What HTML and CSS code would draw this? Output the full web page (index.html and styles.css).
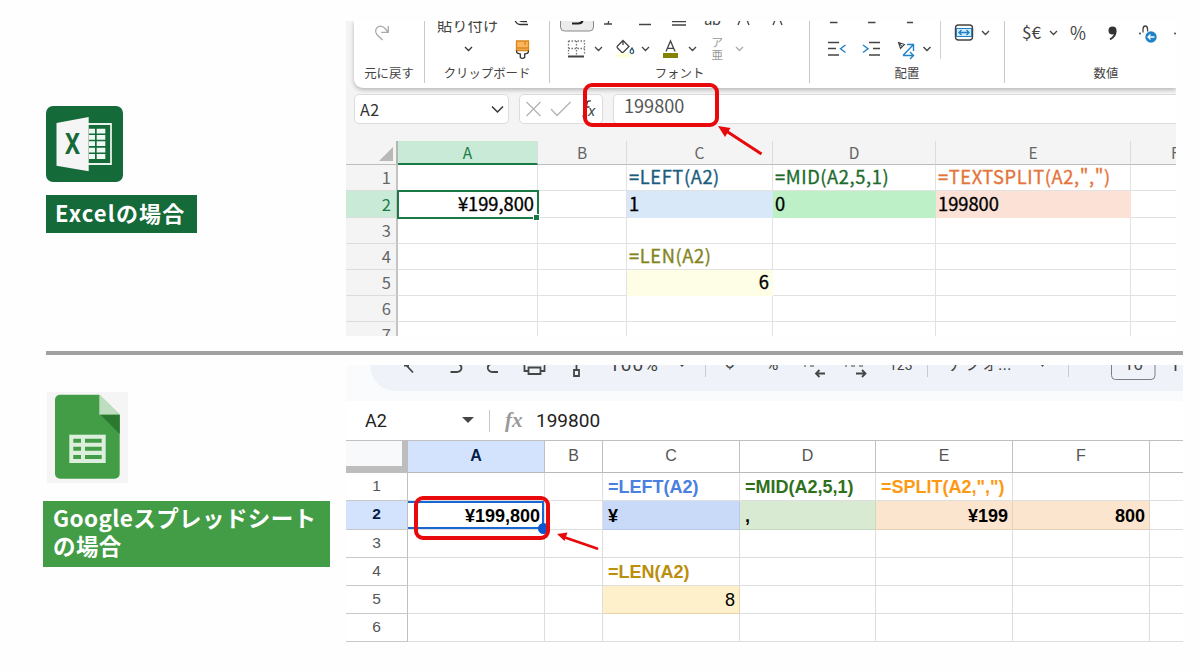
FILE: index.html
```html
<!DOCTYPE html>
<html lang="ja">
<head>
    <meta charset="UTF-8">
    <title>Excelとスプレッドシートの比較</title>
    <link rel="stylesheet" href="styles.css">
</head>
<body>
    <section class="case case-excel">
        <div class="side">
            <svg class="logo-excel" width="77" height="76" viewBox="0 0 77 76">
                <rect width="77" height="76" rx="7" fill="#156a39"/>
                <path d="M42 18h23v40H42" fill="none" stroke="#e6f2ea" stroke-width="1.8"/>
                <g fill="#eef7f1">
                    <path d="M43 22.7h6v4.7h-6zM43 29h6v4.7h-6zM43 35.3h6V40h-6zM43 41.7h6v4.7h-6zM43 48h6v4.9h-6z"/>
                    <path d="M50.7 22.7h8.6v4.7h-8.6zM50.7 29h8.6v4.7h-8.6zM50.7 35.3h8.6V40h-8.6zM50.7 41.7h8.6v4.7h-8.6zM50.7 48h8.6v4.9h-8.6z"/>
                </g>
                <path d="M10.5 17l32.2-6v54.3l-32.2-5.6z" fill="#f5f5f5"/>
                <text class="logo-x" x="19" y="48" textLength="15" lengthAdjust="spacingAndGlyphs">X</text>
            </svg>
            <div class="tag tag-excel">Excelの場合</div>
        </div>

        <div class="shot excel">
            <div class="ribbon">
                <div class="group undo">
                    <svg width="70" height="43" fill="none" stroke="#aaa" stroke-width="1.3">
                        <path d="M28.5 19L22.8 13.5C18.5 7.500 27 1.500 31.500 8L34 11M34.300 5v6.300h-7"/>
                    </svg>
                    <span>元に戻す</span>
                </div>
                <div class="group clip">
                    <svg width="124" height="43" fill="none" stroke="#333" stroke-width="1.3">
                        <text class="t-paste" x="12" y="9.500">貼り付け</text>
                        <path d="M90-1c1 4 3 4.500 6 4.500h7M94-1c1 2 3 1.500 8 1.500"/>
                        <path d="M40 26l3.500 3.500L47 26"/>
                        <path d="M91.500 20h12v9.500h-12z" fill="#fbb55c" stroke="#d9861c"/>
                        <path d="M100 20v4M91.500 27h12" stroke="#d9861c"/>
                        <path d="M91.500 29.500c0 3 1 3 3.800 3.500v3.500q2.200 1.800 4.400 0V33c2.800-.500 3.800-.500 3.800-3.500"/>
                    </svg>
                    <span>クリップボード</span>
                </div>
                <div class="group font">
                    <svg width="259" height="43" fill="none" stroke="#444" stroke-width="1.3">
                        <path d="M10.500-5V6q0 4 4 4h25q4 0 4-4V-5z" fill="#ececec" stroke="#888" stroke-width="1"/>
                        <path d="M22 2.500h6q4 0 4.500-3" stroke="#222" stroke-width="2.200"/>
                        <path d="M54 3h8M59-1l-1 4M89 3.500h12M122 .500h14M122 4h14"/>
                        <text class="t-small" x="154" y="4" textLength="17">ab</text>
                        <path d="M188 4l2.500-6M199 4l-2.500-6M223 4l2.500-6M232 4l-2.500-6"/>
                        <path d="M18.500 20h16v13M18.500 20v13M26.500 20v14M18.500 27.500h16" stroke="#777" stroke-dasharray="1.500 1.500"/>
                        <path d="M18 35.500h16" stroke-width="1.800"/>
                        <path d="M45 26l3.500 3.500L52 26"/>
                        <path d="M73 19.500l6 6-5.500 5.500q-1 1-2 0l-4-4q-1-1 0-2zM73 19.500V24" />
                        <path d="M82 27c-3 3.500-2 5.500 0 5.500s2.500-2 0-5.500z" stroke="#35617d"/>
                        <path d="M66 34.500h15" stroke="#ffffd8" stroke-width="4"/>
                        <path d="M92 26l3.500 3.500L99 26M139 26l3.500 3.500L146 26"/>
                        <path d="M116 30.500l4.500-10.500L125 30.500M117.500 27.300h6"/>
                        <rect x="113" y="32" width="15" height="5" fill="#838300" stroke="none"/>
                        <text class="t-ruby" x="161.500" y="26">ア</text>
                        <text class="t-ruby" x="161.500" y="37.500">亜</text>
                        <path d="M186 26l3.500 3.500L193 26" stroke="#aaa"/>
                    </svg>
                    <span>フォント</span>
                </div>
                <div class="group align">
                    <svg width="194" height="43" fill="none" stroke="#444" stroke-width="1.400">
                        <path d="M20 1.500h7.500M58 1.500h7.500M97 1.500h6"/>
                        <path d="M18 21.500h11M18 27.500h8M18 34h11M59 21.500h11M63 27.500h7M59 34h11"/>
                        <path d="M35.500 24l-5 3.700 5 3.800M53 24l5 3.700-5 3.800" stroke="#1f82c6"/>
                        <path d="M88.500 21.500l6 2-4 4zM88.500 21.500l3.500 4" stroke-width="1.100"/>
                        <path d="M93 34.500L103 24M97 23.500h6.500V30M93 34.500h10M100 31l3.500 3.500L100 38" stroke="#1f82c6"/>
                        <path d="M113.500 26l3.500 3.500 3.500-3.500M172 10l3.500 3.500L179 10"/>
                        <path d="M130.500 0v38" stroke="#d0d0d0" stroke-width="1"/>
                        <rect x="145.500" y="4" width="17" height="15" rx="3"/>
                        <rect x="146.500" y="7.500" width="15" height="8" fill="#d6ebfa" stroke="#1f82c6" stroke-width="1"/>
                        <path d="M149 11.500h10M151.500 9L149 11.500l2.500 2.500M156.500 9l2.500 2.500-2.500 2.500" stroke="#1f82c6"/>
                    </svg>
                    <span>配置</span>
                </div>
                <div class="group number">
                    <svg width="202" height="43" fill="none" stroke="#444" stroke-width="1.300">
                        <text class="t-num" x="17" y="18" textLength="19" lengthAdjust="spacingAndGlyphs">$€</text>
                        <path d="M45 10l3.500 3.500L52 10"/>
                        <text class="t-pct" x="65" y="19" textLength="16" lengthAdjust="spacingAndGlyphs">%</text>
                        <circle cx="107.500" cy="9.500" r="4" fill="#333" stroke="none"/>
                        <path d="M110.500 10q.500 5-5.500 8.500" stroke="#333" stroke-width="1.800"/>
                        <path d="M138 11.500V8.500q0-3.500 2.300-3.500t2.300 3.500v2"/>
                        <circle cx="135" cy="12.500" r="1" fill="#444" stroke="none"/>
                        <circle cx="146" cy="16" r="5.700" fill="#1f82c6" stroke="none"/>
                        <path d="M149.500 16H143M145.500 13.500L143 16l2.500 2.500" stroke="#fff"/>
                        <circle cx="170" cy="12.500" r="1" fill="#444" stroke="none"/>
                    </svg>
                    <span>数値</span>
                </div>
            </div>

            <div class="formula-bar">
                <div class="name-box">
                    <span>A2</span>
                    <svg width="14" height="9" fill="none" stroke="#333" stroke-width="1.500"><path d="M1 1.500l5.500 5.500L12 1.500"/></svg>
                </div>
                <div class="fx-box">
                    <svg width="82" height="28" fill="none" stroke="#b3b3b3" stroke-width="1.300">
                        <path d="M6.500 7l14 14M20.500 7l-14 14M31 14l6 6.500L50.500 7"/>
                        <path d="M71 6q-3.500-1-4 2.500l-1.500 10q-.500 3-3 2.500M63.500 12h6" stroke="#333"/>
                        <text class="t-x" x="68" y="21">x</text>
                    </svg>
                </div>
                <div class="formula">199800</div>
            </div>

            <table class="grid excel-grid">
                <colgroup><col class="w-row"><col class="w-a"><col class="w-b"><col class="w-c"><col class="w-d"><col class="w-e"><col class="w-f"></colgroup>
                <tr class="head"><th class="corner"><svg width="14" height="14"><path d="M14 0v14H0z" fill="#b8b8b8"/></svg></th><th class="active">A</th><th>B</th><th>C</th><th>D</th><th>E</th><th>F</th></tr>
                <tr><th>1</th><td></td><td></td><td class="code c-blue">=LEFT(A2)</td><td class="code c-green">=MID(A2,5,1)</td><td class="code c-orange">=TEXTSPLIT(A2,",")</td><td></td></tr>
                <tr class="tall"><th class="active">2</th><td class="num selected">¥199,800<i class="handle"></i></td><td></td><td class="bg-blue">1</td><td class="bg-green">0</td><td class="bg-orange">199800</td><td></td></tr>
                <tr><th>3</th><td></td><td></td><td></td><td></td><td></td><td></td></tr>
                <tr><th>4</th><td></td><td></td><td class="code c-olive">=LEN(A2)</td><td></td><td></td><td></td></tr>
                <tr><th>5</th><td></td><td></td><td class="num bg-yellow">6</td><td></td><td></td><td></td></tr>
                <tr><th>6</th><td></td><td></td><td></td><td></td><td></td><td></td></tr>
                <tr><th>7</th><td></td><td></td><td></td><td></td><td></td><td></td></tr>
            </table>

            <div class="mark mark-excel"></div>
            <svg class="arrow arrow-excel" width="50" height="36">
                <path d="M46.500 31L12 8.500" stroke="#e8090c" stroke-width="3"/>
                <path d="M3 3l12.500 2-5.500 9z" fill="#e8090c"/>
            </svg>
        </div>
    </section>

    <hr class="divider">

    <section class="case case-sheets">
        <div class="side">
            <svg class="logo-sheets" width="81" height="91" viewBox="0 0 81 91">
                <rect width="81" height="91" fill="#f5f5f5"/>
                <path d="M13 2.700h39.300l20.400 20v59a5 5 0 0 1-5 5H13a5 5 0 0 1-5-5v-74a5 5 0 0 1 5-5z" fill="#439c46"/>
                <path d="M52.300 2.700v20h20.400z" fill="#bfdec0"/>
                <path d="M53.500 22.700h19.200V42z" fill="#2b782f"/>
                <rect x="22.300" y="42.700" width="36.400" height="28.300" fill="#dcefdd"/>
                <path d="M26.300 46.700H34v4h-7.700zM26.300 54.700H34v4h-7.700zM26.300 63H34v4h-7.700zM38 46.700h16.700v4H38zM38 54.700h16.700v4H38zM38 63h16.700v4H38z" fill="#439c46"/>
            </svg>
            <div class="tag tag-sheets">Googleスプレッドシート<br>の場合</div>
        </div>

        <div class="shot sheets">
            <div class="toolbar">
                <svg width="813" height="26" fill="none" stroke="#444746" stroke-width="1.800">
                    <path d="M33-2l3 2 7 7.500M34 .500h5"/>
                    <path d="M80.500 7h7q4-1 4-4t-3-4M121-1q-4 1-3 5 1 3 5 3h5"/>
                    <path d="M155 .500h-.500V6h4M174 .500h.500V6h-4M158.500 2.500h12v6.500h-12z"/>
                    <path d="M206.500-2v7M204 5h5v6h-5z"/>
                    <text class="t-bar t-zoom" x="239" y="6" textLength="49">100%</text>
                    <path d="M310 0h4l-2 2z" fill="#444746" stroke="none"/>
                    <path d="M335.500 0v12M557.500 0v12M698.500 0v12" stroke="#c7cbd1" stroke-width="1"/>
                    <text class="t-bar" x="355" y="3">$</text>
                    <text class="t-bar" x="396" y="4.500">%</text>
                    <path d="M434 1h2M440 1h4M475 1h2M481 1h4M489 1h4" stroke-width="1.200"/>
                    <path d="M455 8.500h-9M449.500 5l-3.500 3.500 3.500 3.500M486 8.500h9.500M492 5l3.500 3.500-3.500 3.500"/>
                    <text class="t-bar t-123" x="519" y="5">123</text>
                    <text class="t-bar t-default" x="577" y="5">デフォ...</text>
                    <path d="M671 0h3l-1.500 2z" fill="#444746" stroke="none"/>
                    <rect x="741.500" y="-12" width="43.500" height="26.500" rx="4" stroke="#7b7f83" stroke-width="1"/>
                    <text class="t-bar" x="754" y="5">10</text>
                    <path d="M805.500 0v6"/>
                </svg>
            </div>

            <div class="sheets-bar">
                <span class="cell-name">A2</span>
                <svg class="caret" width="12" height="7"><path d="M0 0h12L6 6z" fill="#444746"/></svg>
                <span class="bar-line"></span>
                <span class="fx">fx</span>
                <span class="value">199800</span>
            </div>

            <table class="grid sheets-grid">
                <colgroup><col class="w-row"><col class="w-a"><col class="w-b"><col class="w-c"><col class="w-d"><col class="w-e"><col class="w-f"><col class="w-g"></colgroup>
                <tr class="head"><th class="corner"></th><th class="active">A</th><th>B</th><th>C</th><th>D</th><th>E</th><th>F</th><th></th></tr>
                <tr><th>1</th><td></td><td></td><td class="c-blue">=LEFT(A2)</td><td class="c-green">=MID(A2,5,1)</td><td class="c-orange">=SPLIT(A2,",")</td><td></td><td></td></tr>
                <tr class="tall"><th class="active">2</th><td class="num selected">¥199,800<i class="handle"></i></td><td></td><td class="bg-blue">¥</td><td class="bg-green">,</td><td class="num bg-orange">¥199</td><td class="num bg-orange">800</td><td></td></tr>
                <tr><th>3</th><td></td><td></td><td></td><td></td><td></td><td></td><td></td></tr>
                <tr><th>4</th><td></td><td></td><td class="c-gold">=LEN(A2)</td><td></td><td></td><td></td><td></td></tr>
                <tr><th>5</th><td></td><td></td><td class="num plain bg-yellow">8</td><td></td><td></td><td></td><td></td></tr>
                <tr><th>6</th><td></td><td></td><td></td><td></td><td></td><td></td><td></td></tr>
            </table>

            <div class="mark mark-sheets"></div>
            <svg class="arrow arrow-sheets" width="48" height="24">
                <path d="M42 17.500L10 6.500" stroke="#e8090c" stroke-width="2.800" stroke-linecap="round"/>
                <path d="M2 3l10.500-1.500-3 8.500z" fill="#e8090c"/>
            </svg>
        </div>
    </section>
</body>
</html>
```
FILE: styles.css
```css
body {
    margin: 0;
    width: 1200px;
    height: 670px;
    overflow: hidden;
    background-color: #fefefe;
    font-family: "Noto Sans CJK JP", sans-serif;
    color: #333;
}
svg {
    display: block;
}
svg text {
    stroke: none;
    fill: #444;
}
.case {
    display: flex;
}
.case-excel {
    height: 330px;
    padding-top: 21px;
}
.side {
    width: 346px;
    flex: none;
}
.logo-excel {
    margin: 85px 0 13px 46px;
}
.logo-x {
    font-family: "Noto Sans", sans-serif;
    font-size: 28px;
    font-weight: bold;
    fill: #156a39;
}
.logo-sheets {
    margin: 27px 0 18px 47px;
}
.tag {
    box-sizing: border-box;
    color: #fff;
    font-weight: bold;
    font-size: 22px;
}
.tag-excel {
    width: 151px;
    height: 38px;
    margin-left: 46px;
    padding-left: 9px;
    line-height: 34px;
    letter-spacing: 1.2px;
    background-color: #156a39;
}
.tag-sheets {
    width: 287px;
    height: 66px;
    margin-left: 43px;
    padding: 2px 0 0 10px;
    font-size: 22.5px;
    line-height: 28px;
    letter-spacing: 0.4px;
    background-color: #439c46;
}
.divider {
    width: 1137px;
    height: 4px;
    margin: 0 0 0 46px;
    border: none;
    background-color: #a0a2a0;
}
.shot {
    position: relative;
    overflow: hidden;
}

/* Excel ribbon */
.excel {
    width: 830px;
    height: 315px;
    background-color: #f4f4f4;
}
.ribbon {
    display: flex;
    height: 67px;
    margin-left: 8px;
    overflow: hidden;
    background-color: #fff;
    border-radius: 0 0 0 9px;
    box-shadow: 0 2px 4px rgba(0, 0, 0, 0.25);
}
.group {
    box-sizing: border-box;
    flex: none;
    height: 62px;
    border-right: 1px solid #c8c8c8;
    text-align: center;
    font-size: 12.4px;
    line-height: 18px;
    color: #444;
}
.group span {
    display: block;
}
.undo { width: 71px; }
.clip { width: 125px; }
.font { width: 260px; }
.align { width: 195px; }
.number { width: 202px; border: none; }
.t-paste { font-size: 15.3px; }
.t-small { font-size: 15px; }
svg .t-ruby { font-size: 11.5px; fill: #999; }
.t-num { font-size: 17px; }
.t-pct { font-size: 18px; }

/* Excel formula bar */
.formula-bar {
    display: flex;
    gap: 10px;
    height: 30px;
    padding: 6px 0 0 8px;
}
.name-box, .fx-box, .formula {
    box-sizing: border-box;
    height: 30px;
    background-color: #fff;
    border: 1px solid #dcdcdc;
    border-radius: 5px;
}
.name-box {
    display: flex;
    align-items: center;
    justify-content: space-between;
    width: 155px;
    padding: 0 3px 0 5px;
    font-size: 16px;
    letter-spacing: 0.4px;
}
.fx-box {
    width: 84px;
}
.t-x { font: italic 15px "Noto Sans", sans-serif; }
.formula {
    flex: 1;
    padding-left: 10px;
    border-right: none;
    border-radius: 5px 0 0 5px;
    font-size: 18.1px;
    line-height: 21px;
    color: #555;
}

/* Grids */
.grid {
    table-layout: fixed;
    border-spacing: 0;
}
.grid th, .grid td {
    box-sizing: border-box;
    padding: 0;
    white-space: nowrap;
    background-color: #fff;
}
.grid th {
    font-weight: normal;
}
.grid .num {
    text-align: right;
}
.selected {
    position: relative;
}
.handle {
    position: absolute;
}

.excel-grid {
    width: 830px;
    margin-top: 17px;
    font-size: 18.3px;
    line-height: 22px;
    color: #000;
}
.excel-grid .w-row { width: 52px; }
.excel-grid .w-a { width: 140px; }
.excel-grid .w-b { width: 89px; }
.excel-grid .w-c { width: 146px; }
.excel-grid .w-d { width: 163px; }
.excel-grid .w-e { width: 195px; }
.excel-grid .w-f { width: 45px; }
.excel-grid tr { height: 26px; }
.excel-grid .tall { height: 27px; }
.excel-grid .head { height: 24px; }
.excel-grid td {
    padding: 0 3px 3px 2px;
    border-right: 1px solid #e2e2e2;
    border-bottom: 1px solid #e2e2e2;
    -webkit-text-stroke: 0.35px;
}
.excel-grid td:last-child {
    border-right: none;
}
.excel-grid .code {
    letter-spacing: 0.6px;
}
.excel-grid th {
    height: 26px;
    padding-right: 5px;
    border-right: 2px solid #c3c3c3;
    border-bottom: 1px solid #dcdcdc;
    background-color: #f4f4f4;
    text-align: right;
    font-size: 16.5px;
    line-height: 23px;
    color: #666;
}
.excel-grid .head th {
    height: 24px;
    padding: 0 0 2px;
    border-right: 1px solid #dcdcdc;
    border-bottom: 1px solid #bdbdbd;
    text-align: center;
    font-size: 15.5px;
    line-height: 20px;
}
.excel-grid .head th:last-child {
    padding-left: 40px;
    border-right: none;
    text-align: left;
}
.excel-grid .head .corner {
    border-right: 2px solid #b5b5b5;
}
.corner svg {
    margin: 5px 0 0 33px;
}
.excel-grid .active {
    background-color: #caead8;
    color: #1a7a45;
}
.excel-grid .head .active {
    padding-bottom: 1px;
    border-bottom: 2px solid #1a7a45;
}
.excel-grid .selected {
    outline: 2px solid #1a7a45;
    outline-offset: -1px;
}
.excel-grid .handle {
    right: -3px;
    bottom: -4px;
    width: 5px;
    height: 5px;
    border: 1px solid #fff;
    background-color: #1a7a45;
}
.excel-grid .c-blue { color: #1b5d7e; }
.excel-grid .c-green { color: #1d6b2c; }
.excel-grid .c-orange { color: #e4743a; }
.excel-grid .c-olive { color: #84841c; }
.excel-grid .bg-blue { background-color: #d9e8f8; border-color: #d9e8f8; }
.excel-grid .bg-green { background-color: #bdf0c7; border-color: #bdf0c7; }
.excel-grid .bg-orange { background-color: #fbe1d6; border-color: #fbe1d6; }
.excel-grid .bg-yellow { background-color: #fefee6; border-color: #fefee6; }

/* Google Sheets */
.case-sheets {
    padding-top: 10px;
}
.sheets {
    width: 837px;
    height: 277px;
    background-color: #fff;
}
.toolbar {
    height: 36px;
    padding-left: 24px;
    background-color: #f9fbfd;
}
.toolbar svg {
    background-color: #eff3f9;
    border-radius: 0 0 0 26px;
}
.t-bar {
    font-family: Roboto, "Noto Sans CJK JP", sans-serif;
    font-size: 17px;
}
.t-zoom { font-size: 19px; }
.t-123 { font-size: 14px; }
.sheets-bar {
    display: flex;
    align-items: center;
    height: 39px;
    font-family: Roboto, sans-serif;
    font-size: 19px;
    color: #222;
}
.cell-name {
    width: 97px;
    padding-left: 19px;
    font-size: 18px;
}
.bar-line {
    width: 1px;
    height: 22px;
    margin: 0 15px 0 15px;
    background-color: #c7c7c7;
}
.fx {
    width: 31px;
    font: italic bold 21px "Liberation Serif", serif;
    color: #999;
}
.sheets-grid {
    width: 837px;
    font-family: "Liberation Sans", sans-serif;
    font-size: 18px;
    font-weight: bold;
    line-height: 20px;
    color: #000;
}
.sheets-grid .w-row { width: 62px; }
.sheets-grid .w-a { width: 137px; }
.sheets-grid .w-b { width: 58px; }
.sheets-grid .w-c { width: 137px; }
.sheets-grid .w-d { width: 136px; }
.sheets-grid .w-e { width: 137px; }
.sheets-grid .w-f { width: 137px; }
.sheets-grid .w-g { width: 33px; }
.sheets-grid tr { height: 28px; }
.sheets-grid .tall { height: 29px; }
.sheets-grid .head { height: 33px; }
.sheets-grid td {
    padding: 1px 4px 0 5px;
    border-right: 1px solid #dedede;
    border-bottom: 1px solid #dedede;
}
.sheets-grid th {
    padding-bottom: 2px;
    border-right: 1px solid #c0c0c0;
    border-bottom: 1px solid #c8c8c8;
    font-size: 15.5px;
    color: #555;
}
.sheets-grid .head th {
    border-top: 1px solid #c0c0c0;
    border-bottom: 1px solid #b8b8b8;
    font-size: 16px;
}
.sheets-grid .head .corner {
    border-right: 6px solid #bdbdbd;
    border-bottom: 7px solid #bdbdbd;
    background-color: #f8f9fa;
}
.sheets-grid tr > :last-child {
    border-right: none;
}
.sheets-grid .active {
    background-color: #d3e3fd;
    font-weight: bold;
    color: #041e49;
}
.sheets-grid .selected {
    box-shadow: inset 0 2px #1967d2, inset -2px 0 #1967d2, inset 0 -2px #1967d2;
}
.sheets-grid .handle {
    right: -5px;
    bottom: -5px;
    width: 11px;
    height: 11px;
    border-radius: 50%;
    background-color: #0b57d0;
}
.sheets-grid .plain { font-weight: normal; }
.sheets-grid .c-blue { color: #4a80df; }
.sheets-grid .c-green { color: #2f701b; }
.sheets-grid .c-orange { color: #fc9a16; }
.sheets-grid .c-gold { color: #bb8e0c; }
.sheets-grid .bg-blue { background-color: #c9daf8; border-color: #b8c8e6; }
.sheets-grid .bg-green { background-color: #d9ead3; border-color: #c7dac1; }
.sheets-grid .bg-orange { background-color: #fce5cf; border-color: #e8d0b8; }
.sheets-grid .bg-yellow { background-color: #fff0cc; border-color: #e6d5a8; }

/* Red callouts drawn over the screens */
.mark {
    position: absolute;
    box-sizing: border-box;
    border: 4px solid #e8090c;
    border-radius: 9px;
}
.mark-excel {
    left: 237px;
    top: 62px;
    width: 136px;
    height: 44px;
}
.mark-sheets {
    left: 68px;
    top: 131px;
    width: 136px;
    height: 44px;
}
.arrow {
    position: absolute;
}
.arrow-excel {
    left: 369px;
    top: 102px;
}
.arrow-sheets {
    left: 209px;
    top: 166px;
}
```
